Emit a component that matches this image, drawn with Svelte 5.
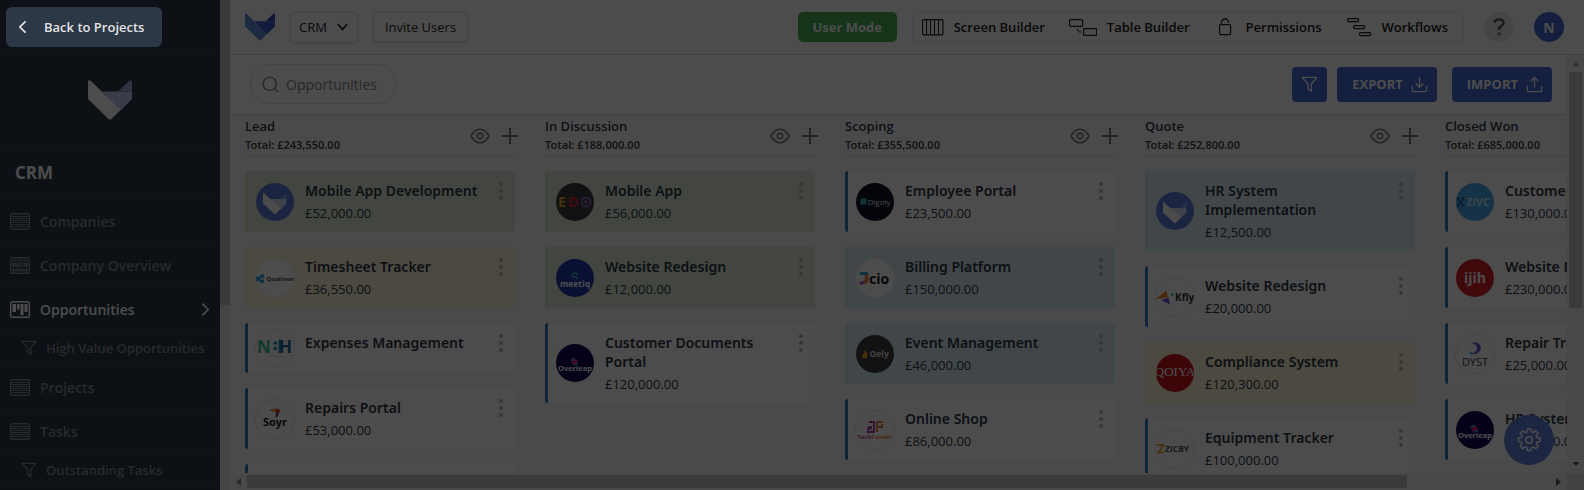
<script>
  const nav = [
    { label: 'Companies', icon: 'list' },
    { label: 'Company Overview', icon: 'dashboard' },
    { label: 'Opportunities', icon: 'board', active: true },
    { label: 'High Value Opportunities', icon: 'filter', sub: true },
    { label: 'Projects', icon: 'list' },
    { label: 'Tasks', icon: 'list' },
    { label: 'Outstanding Tasks', icon: 'filter', sub: true }
  ];

  const columns = [
    {
      name: 'Lead', total: '£243,550.00',
      cards: [
        { title: 'Mobile App Development', amount: '£52,000.00', tone: 'green', logo: 'fox' },
        { title: 'Timesheet Tracker', amount: '£36,550.00', tone: 'yellow', logo: 'qualivon' },
        { title: 'Expenses Management', amount: '', tone: 'plain', logo: 'nbh' },
        { title: 'Repairs Portal', amount: '£53,000.00', tone: 'plain', logo: 'soyr' },
        { title: '', amount: '', tone: 'plain', logo: '' }
      ]
    },
    {
      name: 'In Discussion', total: '£188,000.00',
      cards: [
        { title: 'Mobile App', amount: '£56,000.00', tone: 'green', logo: 'edo' },
        { title: 'Website Redesign', amount: '£12,000.00', tone: 'green', logo: 'meetiq' },
        { title: 'Customer Documents Portal', amount: '£120,000.00', tone: 'plain', logo: 'overleap' }
      ]
    },
    {
      name: 'Scoping', total: '£355,500.00',
      cards: [
        { title: 'Employee Portal', amount: '£23,500.00', tone: 'plain', logo: 'digoly' },
        { title: 'Billing Platform', amount: '£150,000.00', tone: 'blue', logo: 'jcio' },
        { title: 'Event Management', amount: '£46,000.00', tone: 'blue', logo: 'oely' },
        { title: 'Online Shop', amount: '£86,000.00', tone: 'plain', logo: 'techfender' }
      ]
    },
    {
      name: 'Quote', total: '£252,800.00',
      cards: [
        { title: 'HR System Implementation', amount: '£12,500.00', tone: 'blue', logo: 'fox' },
        { title: 'Website Redesign', amount: '£20,000.00', tone: 'plain', logo: 'kfly' },
        { title: 'Compliance System', amount: '£120,300.00', tone: 'yellow', logo: 'qoiya' },
        { title: 'Equipment Tracker', amount: '£100,000.00', tone: 'plain', logo: 'zicby' }
      ]
    },
    {
      name: 'Closed Won', total: '£685,000.00',
      cards: [
        { title: 'Customer Portal', amount: '£130,000.00', tone: 'plain', logo: 'zivo' },
        { title: 'Website Redesign', amount: '£230,000.00', tone: 'plain', logo: 'ijih' },
        { title: 'Repair Tracker', amount: '£25,000.00', tone: 'plain', logo: 'dyst' },
        { title: 'HR System', amount: '£300,000.00', tone: 'plain', logo: 'overleap' }
      ]
    }
  ];

  const discs = {
    fox: '#5c7cdc', edo: '#3a3a42', meetiq: '#2038b0', overleap: '#0e0450',
    digoly: '#0b1226', oely: '#3e3e42', qoiya: '#c8151d', zivo: '#4aa8ee', ijih: '#d81e28'
  };

  let search = $state('');
  let app = $state('CRM');
</script>

{#snippet fox(cls, left, mid, ear)}
  <svg class={cls} viewBox="0 0 44 40" aria-hidden="true">
    <path d="M14 11.500H30L44 11.500V19L32 31Z" fill={mid} />
    <path d="M30 11.500 41.500.6Q44-.8 44 2V11.500Z" fill={ear} />
    <path d="M0 2Q0-.8 2.500.6L32.500 30 23.500 39Q22 40.500 20.500 39L0 19Z" fill={left} />
  </svg>
{/snippet}

{#snippet funnel(cls)}
  <svg class={cls} viewBox="0 0 18 18" fill="none" stroke="currentColor" stroke-width="1.4" stroke-linejoin="round" aria-hidden="true">
    <path d="M1.200 1.500H16.800L11 8.500V16.200L7.500 14V8.500Z" />
  </svg>
{/snippet}

{#snippet navIcon(kind)}
  {#if kind === 'filter'}
    {@render funnel('ico-sub')}
  {:else}
    <svg class="ico-nav" viewBox="0 0 20 17" fill="none" stroke="currentColor" aria-hidden="true">
      <rect x=".7" y=".7" width="18.600" height="15.600" rx="1.500" stroke-width="1.400" />
      {#if kind === 'list'}
        <path d="M2 3.500H18M2 5.500H18M2 7.500H18M2 9.500H18M2 11.500H18M2 13.500H18" stroke-width="1" />
      {:else if kind === 'dashboard'}
        <path d="M2 2.500H6.500V4.200H2ZM7.500 2.500H12V4.200H7.500ZM13 2.500H18V4.200H13ZM2 5.200H12V10.300H2ZM13 5.200H18V10.300H13ZM2 11.500H18V14.500H2Z" fill="currentColor" stroke="none" opacity=".75" />
      {:else}
        <path d="M2.500 3H6V11H2.500ZM7 3H9.500V8.500H7ZM10.500 3H13.500V14H10.500ZM14.500 3H17.500V11H14.500Z" fill="currentColor" stroke="none" />
      {/if}
    </svg>
  {/if}
{/snippet}

{#snippet avatar(kind)}
  <svg class="avatar" viewBox="0 0 40 40" role="img" aria-label={kind}>
    <defs><clipPath id="disc"><circle cx="20" cy="20" r="19" /></clipPath></defs>
    {#if discs[kind]}
      <circle cx="20" cy="20" r="19" fill={discs[kind]} />
    {:else}
      <circle cx="20" cy="20" r="19.500" fill="#fff" stroke="#e9e9ec" stroke-width="1" />
    {/if}
    <g clip-path="url(#disc)">
      {#if kind === 'fox'}
        <path d="M15 17H26L31.500 17V22L25 28Z" fill="#d4dcf5" />
        <path d="M26 17 31.500 11V17Z" fill="#8fa5e8" />
        <path d="M8 10.500 26 26.500 20 32.500 8 21.500Z" fill="#fff" />
      {:else if kind === 'qualivon'}
        <path d="M1 18.500H5V16.500H9V20H5.500V21.500H9V25H5V23H1Z" fill="#38a5dc" />
        <text x="11.500" y="23" class="lg b" font-size="6" fill="#444">Qualivon</text>
      {:else if kind === 'nbh'}
        <text x="2" y="25" class="lg b" font-size="17" fill="#3fbf9a">N</text>
        <path d="M18.500 13.500H22V16.500H18.500ZM18.500 18.500H22V22H18.500ZM23.500 11.500H26V25H23.500Z" fill="#2f8fae" />
        <text x="24" y="25" class="lg b" font-size="17" fill="#2c5f9c">H</text>
        <path d="M12 28.500H28" stroke="#ddd" />
      {:else if kind === 'soyr'}
        <path d="M14 10.500 22 9.500 25.500 11 24 14 22.500 18 20.500 18 21 13.500Z" fill="#d83a2c" />
        <path d="M14 10.500 20.500 10V13Z" fill="#eab02e" />
        <path d="M22 14 24 12.500 22.500 18H21Z" fill="#5a3a9a" />
        <text x="20" y="27" class="lg b" font-size="11" text-anchor="middle" fill="#1a1a1a">Soyr</text>
      {:else if kind === 'edo'}
        <text x="3" y="25" class="lg b" font-size="14" fill="#e0a818">E</text>
        <text x="13" y="25" class="lg b" font-size="14" fill="#d8262c">D</text>
        <circle cx="31" cy="20" r="4.500" fill="none" stroke="#8060b0" stroke-width="2" />
        <circle cx="31" cy="20" r="1.800" fill="#8060b0" />
      {:else if kind === 'meetiq'}
        <path d="M23 16Q18 14 17 17 17 19 20 19 23 20 22.500 21.500" fill="none" stroke="#35bfa0" stroke-width="1.500" />
        <text x="20" y="28.500" class="lg b" font-size="8.500" text-anchor="middle" fill="#fff">meetiq</text>
      {:else if kind === 'overleap'}
        <circle cx="19.500" cy="19" r="3" fill="#d02a80" />
        <path d="M16 18Q17 15 20 15.500M23 20Q22 22 19 22" fill="none" stroke="#39a2dc" stroke-width="1.500" />
        <text x="20" y="27.500" class="lg b" font-size="7.500" text-anchor="middle" fill="#fff">Overleap</text>
      {:else if kind === 'digoly'}
        <rect x="5.500" y="16.500" width="6" height="6" fill="#3fb0a8" />
        <text x="12.500" y="22.500" class="lg" font-size="8" fill="#eee">Digoly</text>
      {:else if kind === 'jcio'}
        <path d="M11.500 15V22Q11.500 25 4.500 25" fill="none" stroke="#a040d0" stroke-width="3.200" />
        <path d="M5 15.500H13" fill="none" stroke="#35a8d0" stroke-width="3.200" />
        <path d="M11.500 17V22Q11.500 24.500 8.500 25" fill="none" stroke="#f08030" stroke-width="3.200" />
        <text x="14" y="26" class="lg b" font-size="14" fill="#17171f">cio</text>
      {:else if kind === 'oely'}
        <path d="M9.500 16Q13 19 12.500 22 12 24.500 9.500 24.500 6.500 24 7.500 21 9.500 19 9.500 16Z" fill="#e8a416" />
        <text x="14.500" y="23" class="lg b" font-size="8.500" fill="#ddd">Oely</text>
      {:else if kind === 'techfender'}
        <path d="M14 12H19V22H13V18.500H16V17H13" fill="none" stroke="#a03aa8" stroke-width="1.800" />
        <path d="M28 12H22V22M22 17H27V14" fill="none" stroke="#ee7a38" stroke-width="1.800" />
        <text x="20" y="29" class="lg b" font-size="6" text-anchor="middle" fill="#b03a90">Tech<tspan fill="#ee8a38">Fender</tspan></text>
      {:else if kind === 'kfly'}
        <path d="M1 22 11.500 13.500 13 20Z" fill="#f0842c" />
        <path d="M6 23 13.500 20.500 15 27.500Z" fill="#7050c8" />
        <path d="M15.500 16.500H19L17 19.500Z" fill="#38a5dc" />
        <text x="20" y="23.500" class="lg b" font-size="10" fill="#333">Kfly</text>
      {:else if kind === 'qoiya'}
        <text x="20" y="23" class="serif" font-size="13" text-anchor="middle" fill="#fff">QOIYA</text>
      {:else if kind === 'zicby'}
        <path d="M1.500 16H8.500L3.500 23.500H9" fill="none" stroke="#e8a430" stroke-width="2" />
        <text x="10" y="23" class="lg b" font-size="8.500" fill="#555">ZICBY</text>
      {:else if kind === 'zivo'}
        <path d="M2 16 9 24M9 16 2 24M2 16H4M7 16H9M2 24H4M7 24H9" fill="none" stroke="#205888" stroke-width="1.300" />
        <text x="11.500" y="23.500" class="lg b" font-size="10.500" fill="#c8e8f8">ZIVC</text>
      {:else if kind === 'ijih'}
        <text x="20" y="25" class="lg b" font-size="14" text-anchor="middle" fill="#fff">ijih</text>
      {:else if kind === 'dyst'}
        <path d="M16 9Q25 7 26 14 25 20 16.500 20.500 22.500 18 22 13 21 10 16 9Z" fill="#6a50d8" />
        <path d="M16.500 20.500Q13.500 19.500 15 17 16 19.500 19.500 18.500Z" fill="#40b0e8" />
        <text x="20" y="32" class="lg" font-size="11" text-anchor="middle" fill="#444">DYST</text>
      {/if}
    </g>
  </svg>
{/snippet}

<div class="shell">
  <aside class="sidebar">
    <div class="side-main">
      <div class="back-row">
        <button class="back">
          <svg viewBox="0 0 10 16" fill="none" stroke="currentColor" stroke-width="2" aria-hidden="true"><path d="M8.500 1.500 2 8 8.500 14.500" /></svg>
          <span>Back to Projects</span>
        </button>
      </div>
      <div class="brand">{@render fox('brand-logo', '#ffffff', '#c3cdee', '#9aabdd')}</div>
      <h1>CRM</h1>
      <nav>
        {#each nav as item}
          <a href="#nav" class:sub={item.sub} class:active={item.active}>
            {@render navIcon(item.icon)}
            <span>{item.label}</span>
            {#if item.active}
              <svg class="chev" viewBox="0 0 10 16" fill="none" stroke="currentColor" stroke-width="1.800" aria-hidden="true"><path d="M1.500 1.500 8 8 1.500 14.500" /></svg>
            {/if}
          </a>
        {/each}
      </nav>
    </div>
    <div class="side-scroll"><div class="side-thumb"></div></div>
  </aside>

  <main>
    <header>
      {@render fox('head-logo', '#6391dc', '#4357c8', '#3350ae')}
      <span class="select-wrap">
        <select aria-label="Project" bind:value={app}><option>CRM</option></select>
        <svg viewBox="0 0 12 8" fill="none" stroke="#1c2530" stroke-width="2" aria-hidden="true"><path d="M1 1 6 6.500 11 1" /></svg>
      </span>
      <button class="invite">Invite Users</button>
      <button class="mode">User Mode</button>
      <div class="builders">
        <button>
          <svg width="22" height="18" viewBox="0 0 22 18" fill="none" stroke="currentColor" aria-hidden="true"><rect x=".6" y="1.600" width="20.300" height="15.300" rx="1" stroke-width="1.200" /><path d="M4.500 2V17M8.500 2V17M12.500 2V17M16.500 2V17" stroke-width="1.100" /></svg>
          Screen Builder
        </button>
        <button>
          <svg width="28" height="18" viewBox="0 0 28 18" fill="none" stroke="currentColor" stroke-width="1.200" aria-hidden="true"><rect x=".6" y="1.600" width="13" height="6.800" rx="1" /><rect x="14.600" y="10.600" width="13" height="6.800" rx="1" /><path d="M8.500 11Q8.500 14 12 14" stroke-dasharray="2 1" /></svg>
          Table Builder
        </button>
        <button>
          <svg width="22" height="18" viewBox="0 0 22 18" fill="none" stroke="currentColor" stroke-width="1.200" aria-hidden="true"><rect x="5.600" y="6.600" width="11" height="10" rx="1" /><path d="M7.500 6.500V4Q8 1 11 .8 14.500 1 14.500 4.500" /></svg>
          Permissions
        </button>
        <button>
          <svg width="26" height="20" viewBox="0 0 26 20" fill="none" stroke="currentColor" stroke-width="1.200" aria-hidden="true"><rect x="1.600" y="1.600" width="11" height="3" rx="1" /><rect x="7.600" y="8.600" width="11" height="3" rx="1" /><rect x="13.600" y="15.600" width="11" height="3" rx="1" /></svg>
          Workflows
        </button>
      </div>
      <button class="round help" aria-label="Help">
        <svg viewBox="0 0 12 18" fill="none" stroke="currentColor" stroke-width="2.600" aria-hidden="true"><path d="M1.500 5Q1.500 1.500 6 1.500 10.500 1.500 10.500 5 10.500 7 8.200 8.200 6 9.300 6 12" /><circle cx="6" cy="16" r=".5" /></svg>
      </button>
      <button class="round user">N</button>
    </header>

    <div class="viewport">
      <div class="content">
        <div class="toolbar">
          <label class="search">
            <svg viewBox="0 0 18 18" fill="none" stroke="currentColor" stroke-width="1.500" aria-hidden="true"><circle cx="8.200" cy="8.200" r="7" /><path d="M13.200 13.200 17 17" /></svg>
            <input type="text" aria-label="Search" placeholder="Opportunities" bind:value={search} />
          </label>
          <button class="primary square" aria-label="Filter">{@render funnel('ico-filter')}</button>
          <button class="primary">
            EXPORT
            <svg viewBox="0 0 18 18" fill="none" stroke="currentColor" stroke-width="1.400" aria-hidden="true"><path d="M9 1V11.500M5 8 9 12 13 8M1.500 10.500V14.500Q1.500 16.500 3.500 16.500H14.500Q16.500 16.500 16.500 14.500V10.500" /></svg>
          </button>
          <button class="primary import">
            IMPORT
            <svg viewBox="0 0 18 18" fill="none" stroke="currentColor" stroke-width="1.400" aria-hidden="true"><path d="M9 12V1.500M5 5.500 9 1.500 13 5.500M1.500 10.500V14.500Q1.500 16.500 3.500 16.500H14.500Q16.500 16.500 16.500 14.500V10.500" /></svg>
          </button>
        </div>
        <div class="board">
          {#each columns as col}
            <section>
              <div class="col-head">
                <div class="col-name">
                  <h2>{col.name}</h2>
                  <p>Total: {col.total}</p>
                </div>
                <button class="plainbtn" aria-label="View">
                  <svg width="20" height="16" viewBox="0 0 20 16" fill="none" stroke="currentColor" stroke-width="1.500" aria-hidden="true"><path d="M1 8Q5 1.200 10 1.200T19 8Q15 14.800 10 14.800T1 8Z" /><circle cx="10" cy="8" r="2.700" /></svg>
                </button>
                <button class="plainbtn" aria-label="Add">
                  <svg width="16" height="16" viewBox="0 0 16 16" stroke="currentColor" stroke-width="2" aria-hidden="true"><path d="M8 0V16M0 8H16" /></svg>
                </button>
              </div>
              {#each col.cards as card}
                <article class={card.tone}>
                  {#if card.title}
                    {@render avatar(card.logo)}
                    <div class="text">
                      <h3>{card.title}</h3>
                      {#if card.amount}<p>{card.amount}</p>{/if}
                    </div>
                    <button class="dots" aria-label="More"><i></i><i></i><i></i></button>
                  {/if}
                </article>
              {/each}
            </section>
          {/each}
        </div>
      </div>
      <div class="vbar">
        <svg viewBox="0 0 8 5"><path d="M0 5 4 0 8 5Z" fill="#8a8a8a" /></svg>
        <div class="vtrack"><div class="vthumb"></div></div>
        <svg viewBox="0 0 8 5"><path d="M0 0 4 5 8 0Z" fill="#505050" /></svg>
      </div>
      <div class="hbar">
        <svg viewBox="0 0 5 8"><path d="M5 0 0 4 5 8Z" fill="#8a8a8a" /></svg>
        <div class="htrack"><div class="hthumb"></div></div>
        <svg viewBox="0 0 5 8"><path d="M0 0 5 4 0 8Z" fill="#505050" /></svg>
      </div>
      <div class="corner"></div>
      <button class="fab" aria-label="Settings">
        <svg viewBox="0 0 24 24" fill="none" stroke="currentColor" stroke-width="1.500" stroke-linejoin="round" aria-hidden="true">
          <circle cx="12" cy="12" r="3.200" />
          <path d="M10.300 1.500h3.400l.6 2.900 1.700.7 2.500-1.700 2.400 2.400-1.700 2.500.7 1.700 2.900.6v3.400l-2.900.6-.7 1.700 1.700 2.500-2.400 2.400-2.500-1.700-1.700.7-.6 2.900h-3.400l-.6-2.900-1.700-.7-2.500 1.700-2.400-2.400 1.700-2.500-.7-1.700-2.900-.6v-3.400l2.900-.6.7-1.700-1.700-2.500 2.400-2.400 2.500 1.700 1.700-.7Z" transform="translate(.2 -.6)" />
        </svg>
      </button>
    </div>
  </main>
  <div class="dim"></div>
</div>

<style>
  :global(body) { margin: 0; overflow: hidden; }
  * { box-sizing: border-box; }
  .shell { display: flex; height: 100vh; overflow: hidden; font-family: 'Open Sans', 'Noto Sans', sans-serif; color: #2d3846; background: #fff; }
  button { font: inherit; color: inherit; border: 0; background: none; padding: 0; }
  svg { display: block; flex: none; }
  h1, h2, h3, p { margin: 0; }
  .dim { position: fixed; inset: 0; background: rgba(0, 0, 0, 0.7); pointer-events: none; z-index: 10; }

  .sidebar { display: flex; flex: none; background: #2d3846; color: #fff; overflow: hidden; }
  .side-main { width: 220px; }
  .back-row { height: 55px; padding: 7px 6px; border-bottom: 1px solid #3a4653; }
  .back { position: relative; z-index: 11; display: flex; align-items: center; gap: 17px; width: 156px; height: 40px; padding: 0 12px; border-radius: 6px; background: #2d3846; color: #e2e2e2; font-size: 13px; font-weight: 600; }
  .back svg { width: 9px; height: 14px; }
  .brand { display: flex; justify-content: center; align-items: center; height: 91px; padding-bottom: 1px; border-bottom: 1px solid #3a4653; }
  .brand-logo { width: 44px; height: 40px; }
  h1 { height: 54px; padding-left: 15px; font-size: 17px; line-height: 53px; font-weight: 700; border-bottom: 1px solid #3a4653; }
  nav a { display: flex; align-items: center; gap: 10px; height: 44px; padding: 0 10px; border-bottom: 1px solid #3a4653; color: #848b94; font-size: 14px; font-weight: 600; text-decoration: none; white-space: nowrap; }
  nav a.active { color: #fff; }
  nav a.sub { height: 34px; padding: 0 0 2px 21px; gap: 9px; font-size: 13px; }
  .ico-nav { width: 20px; height: 17px; }
  .ico-sub { width: 16px; height: 16px; }
  .chev { width: 9px; height: 15px; margin-left: auto; }
  .side-scroll { width: 10px; background: #e6e6e6; }
  .side-thumb { height: 62.2%; background: #c1c1c1; }

  main { display: flex; flex-direction: column; flex: 1; min-width: 0; }
  header { display: flex; align-items: center; flex: none; height: 55px; padding: 0 20px 0 15px; border-bottom: 1px solid #d8d8d8; font-size: 13px; }
  .head-logo { width: 30px; height: 28px; margin-right: 15px; }
  .select-wrap { position: relative; display: flex; }
  .select-wrap svg { position: absolute; right: 10px; top: 11px; width: 11px; height: 8px; pointer-events: none; }
  select { width: 68px; height: 31px; padding: 0 8px; appearance: none; border: 1px solid #dcdcdc; border-radius: 4px; background: #fff; box-shadow: 0 1px 3px rgba(0, 0, 0, 0.12); font: inherit; color: #1c2530; }
  .invite { height: 30px; width: 95px; margin-left: 15px; border: 1px solid #dcdcdc; border-radius: 4px; color: #2b2b2b; box-shadow: 0 1px 3px rgba(0, 0, 0, 0.1); }
  .mode { width: 99px; height: 30px; margin-left: auto; border-radius: 5px; background: #48b058; color: #fff; font-weight: 700; }
  .builders { display: flex; align-items: center; gap: 24px; height: 30px; margin-left: 15px; padding: 0 15px 0 9px; border: 1px solid #e8e8e8; border-radius: 5px; }
  .builders button { display: flex; align-items: center; gap: 10px; font-weight: 600; color: #222; white-space: nowrap; }
  .round { display: flex; align-items: center; justify-content: center; width: 30px; height: 30px; margin-left: 20px; border-radius: 50%; }
  .help { background: #e8e8e8; color: #606060; }
  .help svg { width: 12px; height: 18px; }
  .user { background: #4466d0; color: #fff; font-size: 14px; font-weight: 700; }

  .viewport { position: relative; display: grid; grid-template: minmax(0, 1fr) 17px / minmax(0, 1fr) 17px; flex: 1; min-height: 0; }
  .content { overflow: hidden; background: #f7f8fc; }
  .toolbar { display: flex; align-items: center; gap: 10px; height: 60px; padding: 0 15px 1px 20px; background: #fff; border-bottom: 1px solid #dfdfdf; }
  .search { display: flex; align-items: center; gap: 7px; width: 147px; height: 40px; margin-right: auto; padding: 0 11px; border: 1px solid #e3e3e3; border-radius: 20px; color: #858585; }
  .search svg { width: 17px; height: 17px; }
  .search input { width: 100px; min-width: 0; border: 0; padding: 0; background: none; outline: none; font: inherit; font-size: 14px; }
  .search input::placeholder { color: #858585; opacity: 1; }
  .primary { display: flex; align-items: center; gap: 8px; height: 35px; padding: 0 9px 0 15px; border-radius: 4px; background: #4668d2; color: #fff; font-size: 13px; font-weight: 700; }
  .primary svg { width: 17px; height: 17px; }
  .primary.square { width: 35px; padding: 0; justify-content: center; }
  .import { margin-left: 5px; }

  .board { display: flex; gap: 30px; padding-left: 15px; }
  section { flex: none; width: 270px; }
  .col-head { display: flex; align-items: center; gap: 12px; height: 41px; padding-top: 2px; margin-bottom: 15px; border-bottom: 1px solid #d9dbe0; }
  .col-name { flex: 1; padding-bottom: 4px; }
  .col-name h2 { font-size: 13px; line-height: 20px; font-weight: 600; }
  .col-name p { font-family: 'Noto Sans', sans-serif; font-size: 11px; line-height: 17px; font-weight: 600; color: #444; }
  .plainbtn { color: #777; }
  .plainbtn:last-child { margin-right: -3px; }
  article { display: flex; align-items: center; gap: 10px; min-height: 50px; margin-bottom: 15px; padding-left: 7px; border-left: 3px solid #337ab7; border-radius: 3px; background: #fff; box-shadow: 0 0 2px rgba(0, 0, 0, 0.08); }
  article.green { background: #dfecd8; border-color: #d6e6c8; }
  article.yellow { background: #fbf5d6; border-color: #f8edcc; }
  article.blue { background: #d9edf4; border-color: #cfe6ee; }
  .avatar { width: 40px; height: 40px; }
  .text { flex: 1; align-self: flex-start; padding: 10px 0 9px; }
  h3 { font-family: 'Noto Sans', sans-serif; font-size: 14px; line-height: 19px; font-weight: 600; }
  .text p { margin-top: 4px; font-size: 13px; line-height: 19px; }
  .dots { display: flex; flex-direction: column; align-self: flex-start; gap: 3px; padding: 11px 12px 0 0; }
  .dots i { width: 4px; height: 4px; border-radius: 50%; background: #b4b4b4; }

  .vbar { display: flex; flex-direction: column; align-items: center; padding: 7px 2px; background: #f1f1f1; }
  .vbar svg { width: 8px; height: 4px; }
  .vtrack { flex: 1; align-self: stretch; margin: 6px 0; }
  .vthumb { height: 61.5%; background: #c1c1c1; }
  .hbar { display: flex; align-items: center; padding: 2px 6px; background: #f1f1f1; }
  .hbar svg { width: 5px; height: 8px; }
  .htrack { flex: 1; align-self: stretch; margin: 0 6px; }
  .hthumb { width: 89%; height: 100%; background: #c1c1c1; }
  .corner { background: #dcdcdc; }
  .fab { position: absolute; right: 30px; bottom: 25px; display: flex; align-items: center; justify-content: center; width: 50px; height: 50px; border-radius: 50%; background: rgba(92, 124, 220, 0.95); color: #fff; }
  .fab svg { width: 24px; height: 24px; }
  .lg { font-family: 'Open Sans', sans-serif; }
  .b { font-weight: 700; }
  .serif { font-family: 'Liberation Serif', serif; }
</style>
